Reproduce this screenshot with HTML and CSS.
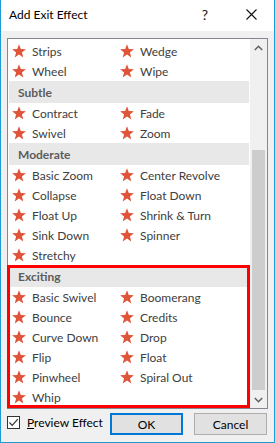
FILE: index.html
```html
<!DOCTYPE html>
<html>
<head>
<meta charset="utf-8">
<link rel="stylesheet" href="styles.css">
</head>
<body>
<svg class="defs" width="0" height="0">
  <symbol id="star" viewBox="0 0 14 14">
    <path d="M7 0.3 L8.8 5.1 L13.9 5.3 L9.9 8.5 L11.3 13.5 L7 10.6 L2.7 13.5 L4.1 8.5 L0.1 5.3 L5.2 5.1 Z"/>
  </symbol>
</svg>
<div class="dialog">
  <div class="titlebar">
    <span class="title">Add Exit Effect</span>
    <span class="cap help">?</span>
    <span class="cap close"><svg width="11" height="11" viewBox="0 0 11 11"><path d="M0.5 0.5 L10.5 10.5 M10.5 0.5 L0.5 10.5" stroke="#111" stroke-width="1.1" fill="none"/></svg></span>
  </div>
  <div class="body">
    <div class="listbox">
      <div class="list">
        <div class="grid">
          <div class="item"><svg class="star"><use href="#star"/></svg>Strips</div>
          <div class="item"><svg class="star"><use href="#star"/></svg>Wedge</div>
          <div class="item"><svg class="star"><use href="#star"/></svg>Wheel</div>
          <div class="item"><svg class="star"><use href="#star"/></svg>Wipe</div>
        </div>
        <div class="group">Subtle</div>
        <div class="grid">
          <div class="item"><svg class="star"><use href="#star"/></svg>Contract</div>
          <div class="item"><svg class="star"><use href="#star"/></svg>Fade</div>
          <div class="item"><svg class="star"><use href="#star"/></svg>Swivel</div>
          <div class="item"><svg class="star"><use href="#star"/></svg>Zoom</div>
        </div>
        <div class="group">Moderate</div>
        <div class="grid">
          <div class="item"><svg class="star"><use href="#star"/></svg>Basic Zoom</div>
          <div class="item"><svg class="star"><use href="#star"/></svg>Center Revolve</div>
          <div class="item"><svg class="star"><use href="#star"/></svg>Collapse</div>
          <div class="item"><svg class="star"><use href="#star"/></svg>Float Down</div>
          <div class="item"><svg class="star"><use href="#star"/></svg>Float Up</div>
          <div class="item"><svg class="star"><use href="#star"/></svg>Shrink &amp; Turn</div>
          <div class="item"><svg class="star"><use href="#star"/></svg>Sink Down</div>
          <div class="item"><svg class="star"><use href="#star"/></svg>Spinner</div>
          <div class="item"><svg class="star"><use href="#star"/></svg>Stretchy</div>
        </div>
        <div class="group">Exciting</div>
        <div class="grid">
          <div class="item"><svg class="star"><use href="#star"/></svg>Basic Swivel</div>
          <div class="item"><svg class="star"><use href="#star"/></svg>Boomerang</div>
          <div class="item"><svg class="star"><use href="#star"/></svg>Bounce</div>
          <div class="item"><svg class="star"><use href="#star"/></svg>Credits</div>
          <div class="item"><svg class="star"><use href="#star"/></svg>Curve Down</div>
          <div class="item"><svg class="star"><use href="#star"/></svg>Drop</div>
          <div class="item"><svg class="star"><use href="#star"/></svg>Flip</div>
          <div class="item"><svg class="star"><use href="#star"/></svg>Float</div>
          <div class="item"><svg class="star"><use href="#star"/></svg>Pinwheel</div>
          <div class="item"><svg class="star"><use href="#star"/></svg>Spiral Out</div>
          <div class="item"><svg class="star"><use href="#star"/></svg>Whip</div>
        </div>
      </div>
      <div class="scrollbar">
        <div class="sbtn"><svg width="9" height="6" viewBox="0 0 9 6"><path d="M0.8 5 L4.5 1.3 L8.2 5" stroke="#606060" stroke-width="1.5" fill="none"/></svg></div>
        <div class="track"><div class="thumb"></div></div>
        <div class="sbtn"><svg width="9" height="6" viewBox="0 0 9 6"><path d="M0.8 1 L4.5 4.7 L8.2 1" stroke="#606060" stroke-width="1.5" fill="none"/></svg></div>
      </div>
    </div>
    <div class="footer">
      <label class="check">
        <span class="box"><svg width="11" height="11" viewBox="0 0 11 11"><path d="M1.5 5.5 L4.2 8.3 L9.8 2.2" stroke="#333" stroke-width="1.2" fill="none"/></svg></span>
        <span><span class="u">P</span>review Effect</span>
      </label>
      <div class="buttons">
        <button class="btn default">OK</button>
        <button class="btn">Cancel</button>
      </div>
    </div>
  </div>
  <div class="highlight"></div>
</div>
</body>
</html>
```

FILE: styles.css
```css
html, body {
  margin: 0;
  padding: 0;
}
body {
  width: 275px;
  height: 443px;
  font-family: "Segoe UI", Lato, "Liberation Sans", sans-serif;
  font-size: 12px;
  overflow: hidden;
}
.defs {
  position: absolute;
  width: 0;
  height: 0;
}
.dialog {
  position: relative;
  box-sizing: border-box;
  width: 275px;
  height: 443px;
  border: 1px solid #1f9bd4;
  border-top: none;
  display: flex;
  flex-direction: column;
  background: #f0f0f0;
}
.titlebar {
  height: 31px;
  flex: none;
  background: #fff;
  display: flex;
  align-items: center;
}
.title {
  flex: 1;
  padding-left: 8px;
  color: #000;
  font-size: 12px;
  padding-bottom: 2px;
}
.cap {
  width: 46px;
  height: 31px;
  display: flex;
  align-items: center;
  justify-content: center;
}
.help {
  font-size: 14px;
  color: #111;
  padding-bottom: 3px;
  box-sizing: border-box;
}
.close svg {
  margin-bottom: 3px;
}
.body {
  flex: 1;
  padding: 7px 6px 0 6px;
  display: flex;
  flex-direction: column;
}
.listbox {
  box-sizing: border-box;
  width: 261px;
  height: 371px;
  border: 1px solid #828790;
  display: flex;
  background: #fff;
}
.list {
  width: 242px;
  height: 369px;
  overflow: hidden;
  padding-top: 2px;
  box-sizing: border-box;
  background: #fff;
}
.grid {
  display: grid;
  grid-template-columns: 108px 108px;
  grid-auto-rows: 20px;
  padding-left: 4px;
}
.item {
  display: flex;
  align-items: center;
  gap: 6px;
  color: #404040;
  white-space: nowrap;
}
.star {
  width: 14px;
  height: 14px;
  fill: #e0553a;
  flex: none;
}
.group {
  height: 22px;
  margin: 0 1px;
  background: #e8e8e8;
  color: #5c5c5c;
  font-weight: bold;
  padding-left: 9px;
  display: flex;
  align-items: center;
}
.scrollbar {
  width: 17px;
  height: 369px;
  background: #f0f0f0;
  display: flex;
  flex-direction: column;
}
.sbtn {
  height: 17px;
  flex: none;
  display: flex;
  align-items: center;
  justify-content: center;
}
.track {
  flex: 1;
  display: flex;
  flex-direction: column;
  justify-content: flex-end;
  padding-bottom: 1px;
}
.thumb {
  height: 240px;
  margin: 0 2px;
  background: #cdcdcd;
}
.footer {
  margin-top: 4px;
  height: 22px;
  display: flex;
  align-items: center;
  justify-content: space-between;
  padding-right: 1px;
}
.check {
  display: flex;
  align-items: center;
  gap: 7px;
  color: #000;
  margin-top: -3px;
}
.box {
  box-sizing: border-box;
  width: 13px;
  height: 13px;
  border: 1px solid #333;
  background: #fff;
  display: flex;
  align-items: center;
  justify-content: center;
}
.u {
  text-decoration: underline;
}
.buttons {
  display: flex;
  gap: 11px;
}
.btn {
  box-sizing: border-box;
  width: 73px;
  height: 22px;
  margin: 0;
  padding: 0;
  border: 1px solid #adadad;
  background: #e1e1e1;
  font-family: "Segoe UI", Lato, "Liberation Sans", sans-serif;
  font-size: 12px;
  color: #000;
}
.btn.default {
  border: 2px solid #0078d7;
}
.highlight {
  position: absolute;
  left: 6px;
  top: 265px;
  width: 243px;
  height: 143px;
  box-sizing: border-box;
  border: 3px solid #ff0000;
}
```
